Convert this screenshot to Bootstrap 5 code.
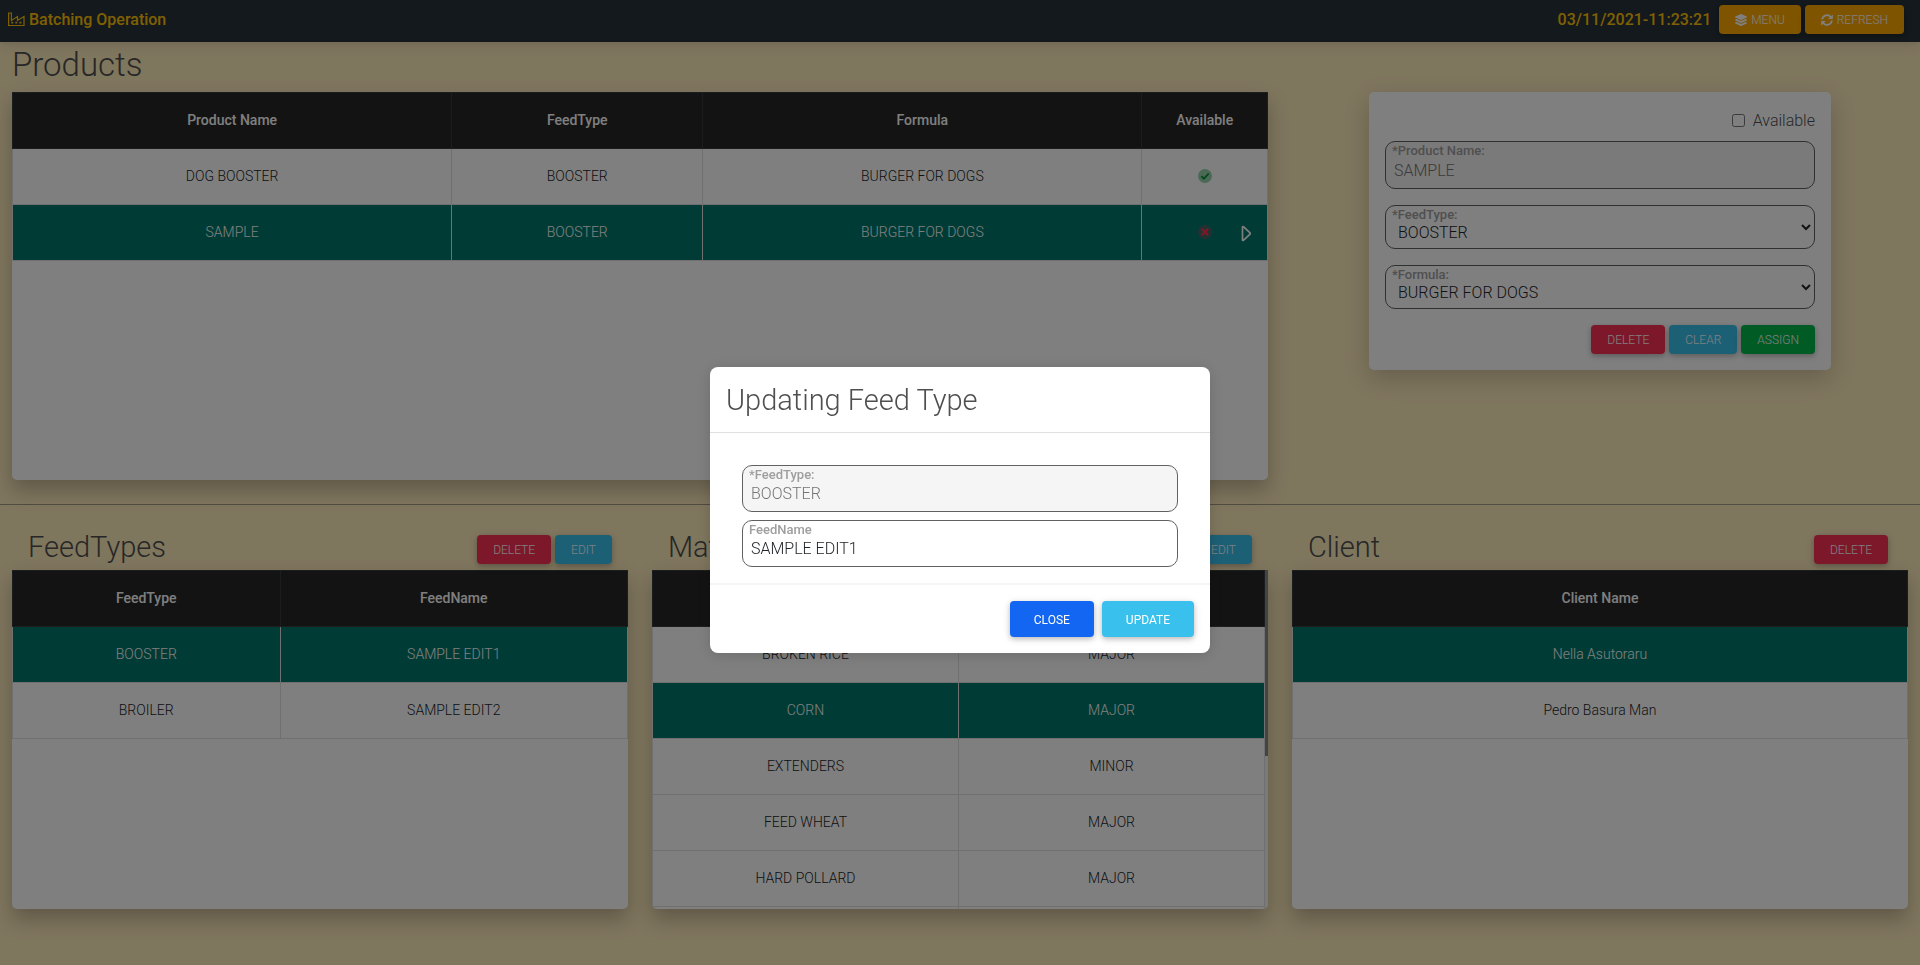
<!DOCTYPE html>
<html lang="en">
<head>
<meta charset="utf-8">
<meta name="viewport" content="width=device-width, initial-scale=1">
<title>Batching Operation</title>
<link href="https://cdn.jsdelivr.net/npm/bootstrap@5.3.0/dist/css/bootstrap.min.css" rel="stylesheet">
<style>
  body { font-family: Roboto, "Liberation Sans", sans-serif; font-weight: 300; font-size: 16px; line-height: 26px; color: #4f4f4f; background: #ffecbd; }
  h1, h2 { margin: 0; }
  .page-title { font-size: 33px; line-height: 38px; font-weight: 300; }
  .panel-title, .modal-title { font-size: 29px; line-height: 34px; font-weight: 300; }
  .topbar { background: #263238; color: #ffc107; font-weight: 500; height: 42px; padding: 0 16px 3px 8px; box-shadow: 0 4px 12px rgba(0,0,0,.07), 0 2px 4px rgba(0,0,0,.05); }
  .topbar .brand { color: inherit; text-decoration: none; }
  .btn { --bs-btn-font-size: 12px; --bs-btn-line-height: 18px; --bs-btn-border-radius: 4px; --bs-btn-color: #fff; --bs-btn-font-weight: 400; border: 0; padding: 10px 24px 8px; text-transform: uppercase; box-shadow: 0 2px 5px rgba(0,0,0,.2), 0 2px 10px rgba(0,0,0,.1); }
  .btn-sm { padding: 6px 16px 5px; }
  .page .btn { font-weight: 300; }
  .btn-warning { --bs-btn-color: #fff; --bs-btn-bg: #ffa900; }
  .btn-danger { --bs-btn-bg: #f93154; }
  .btn-info { --bs-btn-color: #fff; --bs-btn-bg: #39c0ed; }
  .btn-success { --bs-btn-bg: #00b74a; }
  .btn-primary { --bs-btn-bg: #1266f1; }
  .btn svg { width: 12px; height: 12px; margin-right: 1px; }
  .btn svg, .brand svg { vertical-align: -2px; }
  .board { background: #fff; border-radius: 0 0 5px 5px; box-shadow: 0 10px 20px rgba(0,0,0,.25); overflow: hidden; }
  .board-tall { height: 388px; }
  .board-short { height: 339px; }
  .panel-head { padding: 0 16px; margin-bottom: 6px; }
  .scroll-rail { width: 3px; background: #f5f5f5; }
  .scroll-rail span { display: block; height: 55%; background: #888; }
  .grid { width: 100%; table-layout: fixed; font-size: 14px; line-height: 23px; text-align: center; color: #212529; margin: 0; }
  .grid th, .grid td { padding: 16px; border: 1px solid #e0e0e0; }
  .grid thead th { background: #262626; border-color: #373b3e; color: #fff; font-weight: 500; }
  .grid tr.picked td { background: #00796b; color: #fff; }
  .grid td svg { vertical-align: -2px; }
  .w-35 { width: 35%; } .w-20 { width: 20%; } .w-44 { width: 43.5%; }
  .row-arrow { right: 15px; top: 20px; line-height: 16px; }
  .divider { border: 0; border-top: 1px solid #a19a85; opacity: 1; margin: 24px 0 25px; }
  .form-side { padding-top: 50px; }
  .form-card { background: #fff; border-radius: 5px; padding: 16px; box-shadow: 0 8px 25px rgba(0,0,0,.2); }
  .form-card .avail { line-height: 25px; }
  .form-card .avail input { width: 13px; height: 13px; }
  .field { position: relative; }
  .field label { position: absolute; left: 7px; top: 1px; font-size: 13px; line-height: 18px; font-weight: 500; color: #9e9e9e; }
  .field input, .field select { display: block; width: 100%; border: 1px solid #616161; border-radius: 10px; background: #fff; color: #212529; font-weight: 300; padding: 11px 8px 0; }
  .field input { height: 48px; }
  .field select { height: 44px; }
  .field input:disabled { background: #f5f5f5; color: #757575; }
  .modal .field input { height: 47px; }
  .modal-dialog { margin-top: 38vh; }
  .modal-content { border: 0; border-radius: 8px; color: #4f4f4f; box-shadow: 0 2px 15px rgba(0,0,0,.15); }
  .modal-header { padding: 16px 16px 15px; border-color: #e0e0e0; }
  .modal-footer { padding: 16px; border-top: 2px solid #f5f5f5; }
</style>
</head>
<body>
<div class="page pb-5">
  <nav class="topbar d-flex justify-content-between align-items-center">
    <a class="brand" href="#"><svg width="17" height="15" viewBox="0 0 17 15" fill="none" stroke="currentColor" stroke-width="1.2"><path d="M.6 1h2.800v7.500L9.500 4.600v3.900l6.500-4v9H.6z"/><path d="M3.200 10.700h2M7.300 10.700h2M11.400 10.700h2" stroke-width="1.800"/></svg> Batching Operation</a>
    <div class="d-flex align-items-center gap-1">
      <span class="me-1">03/11/2021-11:23:21</span>
      <button type="button" class="btn btn-warning btn-sm"><svg viewBox="0 0 512 512" fill="currentColor"><path d="M12.400 148l232.900 105.700c6.800 3.100 14.500 3.100 21.300 0L499.600 148c16.600-7.500 16.600-32.500 0-40L266.700 2.300a25.600 25.600 0 0 0-21.300 0L12.400 108c-16.500 7.500-16.500 32.500 0 40zm487.200 88.300l-58.100-26.300-161.600 73.300c-7.600 3.400-15.600 5.200-23.900 5.200s-16.300-1.700-23.900-5.200L70.500 210l-58.100 26.300c-16.500 7.500-16.500 32.500 0 40l232.900 105.600c6.800 3.100 14.500 3.100 21.300 0l233-105.600c16.500-7.500 16.500-32.500 0-40zm0 127.800l-57.900-26.200-161.900 73.400c-7.500 3.400-15.600 5.200-23.900 5.200s-16.300-1.700-23.900-5.200L70.300 337.900l-57.900 26.200c-16.500 7.500-16.500 32.500 0 40l232.900 105.600c6.800 3.100 14.500 3.100 21.300 0l233-105.600c16.500-7.500 16.500-32.500 0-40z"/></svg> Menu</button>
      <button type="button" class="btn btn-warning btn-sm"><svg viewBox="0 0 512 512" fill="none" stroke="currentColor" stroke-width="76"><path d="M50 235A208 208 0 0 1 420 130M462 277A208 208 0 0 1 92 382"/><path fill="currentColor" stroke="none" d="M504 20v190H304zM8 492V302h200z"/></svg> Refresh</button>
    </div>
  </nav>

  <main class="container-fluid px-0">
    <div class="row g-0">
      <section class="col-8 px-2">
        <div class="px-1">
          <h1 class="page-title pt-1 pb-2">Products</h1>
          <div class="board board-tall">
            <table class="grid">
              <thead><tr><th class="w-35">Product Name</th><th class="w-20">FeedType</th><th class="w-35">Formula</th><th>Available</th></tr></thead>
              <tbody>
                <tr><td>DOG BOOSTER</td><td>BOOSTER</td><td>BURGER FOR DOGS</td><td><svg width="14" height="14" viewBox="0 0 14 14"><circle cx="7" cy="7" r="7" fill="#99d2ab"/><path d="M3.300 7.200l2.600 2.500 4.800-5.200" fill="none" stroke="#00913b" stroke-width="1.800"/></svg></td></tr>
                <tr class="picked"><td>SAMPLE</td><td>BOOSTER</td><td>BURGER FOR DOGS</td><td class="position-relative"><svg width="14" height="14" viewBox="0 0 14 14"><circle cx="7" cy="7" r="7" fill="#f93154" opacity=".3"/><path d="M4 4l6 6M10 4l-6 6" stroke="#f93154" stroke-width="2.300"/></svg><span class="row-arrow position-absolute"><svg width="11" height="17" viewBox="0 0 11 17"><path d="M1.500 1.800q.5-.6 1.200 0l6.300 6q.6.700 0 1.400l-6.300 6q-.7.600-1.200 0z" fill="none" stroke="#fff" stroke-width="1.700"/></svg></span></td></tr>
              </tbody>
            </table>
          </div>
        </div>
      </section>
      <section class="col-4 px-2 form-side">
        <div class="px-1">
          <form class="form-card w-75 mx-auto">
            <div class="avail d-flex justify-content-end align-items-center gap-2 mb-2"><input type="checkbox" id="avail"><label for="avail">Available</label></div>
            <div class="field mb-3"><label for="pname">*Product Name:</label><input id="pname" type="text" value="SAMPLE" disabled></div>
            <div class="field mb-3"><label for="ptype">*FeedType:</label><select id="ptype"><option>BOOSTER</option></select></div>
            <div class="field mb-3"><label for="pform">*Formula:</label><select id="pform"><option>BURGER FOR DOGS</option></select></div>
            <div class="d-flex justify-content-end gap-1">
              <button type="button" class="btn btn-danger btn-sm">Delete</button>
              <button type="button" class="btn btn-info btn-sm">Clear</button>
              <button type="button" class="btn btn-success btn-sm">Assign</button>
            </div>
          </form>
        </div>
      </section>
    </div>

    <hr class="divider">

    <div class="row gx-4 mx-0">
      <section class="col-4">
        <div class="panel-head d-flex justify-content-between align-items-end"><h2 class="panel-title">FeedTypes</h2>
          <div class="d-flex gap-1"><button type="button" class="btn btn-danger btn-sm">Delete</button><button type="button" class="btn btn-info btn-sm">Edit</button></div></div>
        <div class="board board-short">
          <table class="grid">
            <thead><tr><th class="w-44">FeedType</th><th>FeedName</th></tr></thead>
            <tbody><tr class="picked"><td>BOOSTER</td><td>SAMPLE EDIT1</td></tr><tr><td>BROILER</td><td>SAMPLE EDIT2</td></tr></tbody>
          </table>
        </div>
      </section>
      <section class="col-4">
        <div class="panel-head d-flex justify-content-between align-items-end"><h2 class="panel-title">Material</h2>
          <div class="d-flex gap-1"><button type="button" class="btn btn-danger btn-sm">Delete</button><button type="button" class="btn btn-info btn-sm">Edit</button></div></div>
        <div class="board board-short d-flex">
          <div class="flex-fill">
            <table class="grid">
              <thead><tr><th>Material</th><th>Type</th></tr></thead>
              <tbody>
                <tr><td>BROKEN RICE</td><td>MAJOR</td></tr>
                <tr class="picked"><td>CORN</td><td>MAJOR</td></tr>
                <tr><td>EXTENDERS</td><td>MINOR</td></tr>
                <tr><td>FEED WHEAT</td><td>MAJOR</td></tr>
                <tr><td>HARD POLLARD</td><td>MAJOR</td></tr>
                <tr><td></td><td></td></tr>
              </tbody>
            </table>
          </div>
          <div class="scroll-rail flex-shrink-0"><span></span></div>
        </div>
      </section>
      <section class="col-4">
        <div class="panel-head d-flex justify-content-between align-items-end"><h2 class="panel-title">Client</h2>
          <button type="button" class="btn btn-danger btn-sm me-1">Delete</button></div>
        <div class="board board-short">
          <table class="grid">
            <thead><tr><th>Client Name</th></tr></thead>
            <tbody><tr class="picked"><td>Nella Asutoraru</td></tr><tr><td>Pedro Basura Man</td></tr></tbody>
          </table>
        </div>
      </section>
    </div>
  </main>
</div>

<div class="modal-backdrop show"></div>
<div class="modal show d-block" tabindex="-1" role="dialog" aria-labelledby="dlgTitle">
  <div class="modal-dialog">
    <div class="modal-content">
      <div class="modal-header"><h2 class="modal-title" id="dlgTitle">Updating Feed Type</h2></div>
      <div class="modal-body p-3">
        <div class="field mx-3 mt-3 mb-2"><label for="ftype">*FeedType:</label><input id="ftype" type="text" value="BOOSTER" disabled></div>
        <div class="field mx-3"><label for="fname">FeedName</label><input id="fname" type="text" value="SAMPLE EDIT1"></div>
      </div>
      <div class="modal-footer gap-2"><button type="button" class="btn btn-primary m-0">Close</button><button type="button" class="btn btn-info m-0">Update</button></div>
    </div>
  </div>
</div>
<script src="https://cdn.jsdelivr.net/npm/bootstrap@5.3.0/dist/js/bootstrap.bundle.min.js"></script>
</body>
</html>
